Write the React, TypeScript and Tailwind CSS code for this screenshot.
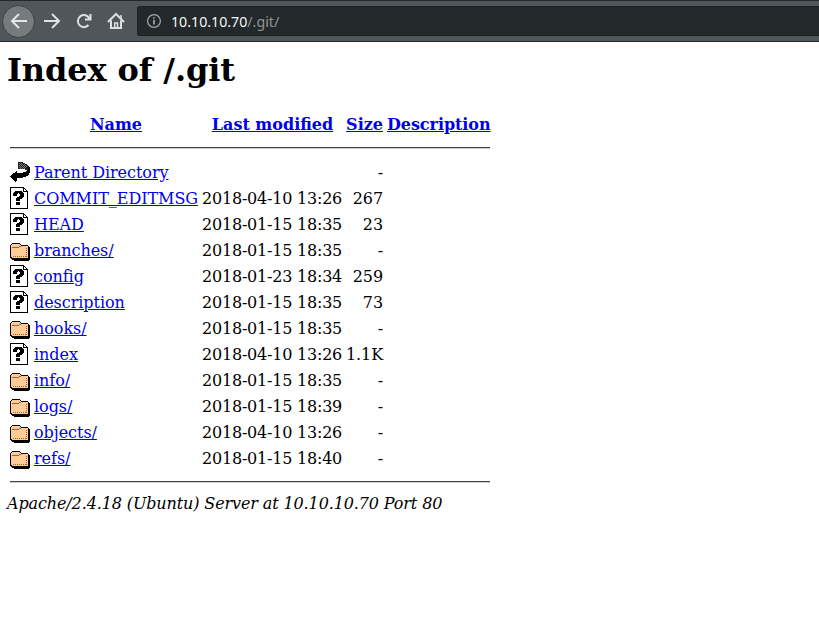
import React from 'react';

type Kind = 'back' | 'file' | 'folder';

const rows: { kind: Kind; name: string; date?: string; size: string }[] = [
  { kind: 'back', name: 'Parent Directory', size: '-' },
  { kind: 'file', name: 'COMMIT_EDITMSG', date: '2018-04-10 13:26', size: '267' },
  { kind: 'file', name: 'HEAD', date: '2018-01-15 18:35', size: '23' },
  { kind: 'folder', name: 'branches/', date: '2018-01-15 18:35', size: '-' },
  { kind: 'file', name: 'config', date: '2018-01-23 18:34', size: '259' },
  { kind: 'file', name: 'description', date: '2018-01-15 18:35', size: '73' },
  { kind: 'folder', name: 'hooks/', date: '2018-01-15 18:35', size: '-' },
  { kind: 'file', name: 'index', date: '2018-04-10 13:26', size: '1.1K' },
  { kind: 'folder', name: 'info/', date: '2018-01-15 18:35', size: '-' },
  { kind: 'folder', name: 'logs/', date: '2018-01-15 18:39', size: '-' },
  { kind: 'folder', name: 'objects/', date: '2018-04-10 13:26', size: '-' },
  { kind: 'folder', name: 'refs/', date: '2018-01-15 18:40', size: '-' },
];

function RowIcon({ kind }: { kind: Kind }) {
  return (
    <svg width="20" height="22" viewBox="0 0 20 22" shapeRendering="crispEdges" className="block shrink-0">
      {kind === 'back' && (
        <>
          <path fill="#222" d="M8 1h5v1h2v1h2v1h1v1h1v5h-2v-1h-2v-1H8z" />
          <path stroke="#777" strokeDasharray="1 1" d="M9 2.5h4M10 3.5h6M9 4.5h7M10 5.5h7M9 6.5h8M10 7.5h6" />
          <path fill="#fff" d="M8 8h6v1h2v1h-1v1H8z" />
          <path fill="#000" d="M18 5h1v1h1v6h-1v2h-1v1h-2v1h-3v1H7v3H6v1H5v-1H4v-1H3v-1H2v-1H1v-1H0v-1h1v-1h1v-1h1v-1h2v-1h1v-1h1v2h6v-1h3v-1h1v-1h1z" />
        </>
      )}
      {kind === 'file' && (
        <>
          <path fill="#000" d="M0 0h14v1h1v1h1v1h1v1h1v18H0z" />
          <path fill="#fff" d="M1 1h12v4h4v16H1z" />
          <path fill="#fff" d="M14 2h1v1h1v1h-2z" />
          <path fill="#000" d="M5 4h7v1h1v1h1v4h-1v1h-1v1h-2v2H6v-3h1v-1h2V9h1V7H9V6H8v1H7v2H3V6h1V5h1zM6 15h4v3H6z" />
        </>
      )}
      {kind === 'folder' && (
        <>
          <path fill="#000" d="M2 4h8v1h1v1h7v1h1v1h1v13h-1v1H4v-1H2v-1H1v-1H0V6h1V5h1z" />
          <path fill="#fc9" d="M2 5h8v1h1v1h7v12H2v-1H1V6h1z" />
          <path stroke="#996633" fill="none" d="M2 8.5h7M9 7.5h2" />
          <path stroke="#996633" fill="none" strokeDasharray="1 1" d="M3 17.5h13M16.5 9v9" />
        </>
      )}
    </svg>
  );
}

function Rule() {
  return <div className="ml-[3px] h-[2px] w-[480px] border-b border-[#d0d0d0] bg-[#444]" />;
}

export default function App() {
  return (
    <div className="h-[640px] w-[819px] overflow-hidden bg-white font-['DejaVu_Serif',serif] text-[16px] text-black">
      <header className="flex h-[42px] items-center border-y border-[#24282a] bg-[#50575a]">
        <div className="ml-[2px] flex size-[33px] items-center justify-center rounded-full border border-[#3b4042] bg-[#777b7c]">
          <svg width="18" height="16" viewBox="0 0 18 16" fill="none" stroke="#e5e6e6" strokeWidth="2"><path d="M17 8H2M9 1 2 8l7 7" /></svg>
        </div>
        <svg className="ml-[9px]" width="17" height="16" viewBox="0 0 17 16" fill="none" stroke="#dedfdf" strokeWidth="2"><path d="M0 8h15M8 1l7 7-7 7" /></svg>
        <svg className="ml-[15px]" width="16" height="16" viewBox="0 0 16 16" fill="none" stroke="#dedfdf" strokeWidth="2"><path d="M13.3 5.5A6 6 0 1 0 12.5 12M9 6.5h5.5V1" /></svg>
        <svg className="ml-[15px]" width="18" height="18" viewBox="0 0 18 18" fill="none" stroke="#dedfdf" strokeWidth="2"><path d="M1 10 9 2l8 8M4 8.5V16h10V8.5" /><path strokeWidth="1.5" d="M7.7 16v-5h2.8v5M14 3v4" /></svg>
        <div className="ml-[12px] flex h-[30px] flex-1 items-center rounded-l-[3px] border border-r-0 border-[#1d2122] bg-[#23282b] pl-[9px]">
          <svg width="14" height="14" viewBox="0 0 14 14" fill="none" stroke="#a6a8a9"><circle cx="7" cy="7" r="6.4" strokeWidth="1.2" /><path strokeWidth="1.7" d="M7 6v4.5M7 3.2v1.6" /></svg>
          <span className="ml-[10px] mt-px font-['Noto_Sans',sans-serif] text-[14.2px] leading-5 text-[#f6f6f6]">10.10.10.70<span className="text-[#929596]">/.git/</span></span>
        </div>
      </header>
      <main className="pl-[7px]">
        <h1 className="h-[63px] pt-[9px] text-[32px] font-bold leading-[38px] tracking-[-0.12px]">Index of /.git</h1>
        <div className="flex h-[42px] pt-[10px] font-bold leading-[19px] text-[#0000ee]">
          <div className="ml-[27px] w-[164px] text-center underline">Name</div>
          <div className="ml-[4px] w-[141px] text-center underline">Last modified</div>
          <div className="ml-[2px] w-[38px] text-right underline">Size</div>
          <div className="ml-[4px] tracking-[-0.07px] underline">Description</div>
        </div>
        <Rule />
        <div className="pt-[12px]">
          {rows.map((row) => (
            <div key={row.name} className="flex h-[26px] items-start whitespace-pre pl-[3px] leading-[19px]">
              <RowIcon kind={row.kind} />
              <div className="ml-[4px] w-[168px] pt-[2px] tracking-[-0.05px] text-[#0000ee]"><span className="underline">{row.name}</span></div>
              <div className="w-[140px] pt-[2px] tracking-[-0.21px]">{row.date}</div>
              <div className="w-[41px] pt-[2px] text-right tracking-[-0.1px]">{row.size}</div>
            </div>
          ))}
        </div>
        <div className="pt-[8px]"><Rule /></div>
        <address className="pt-[11px] italic leading-[19px] tracking-[-0.12px]">Apache/2.4.18 (Ubuntu) Server at 10.10.10.70 Port 80</address>
      </main>
    </div>
  );
}
